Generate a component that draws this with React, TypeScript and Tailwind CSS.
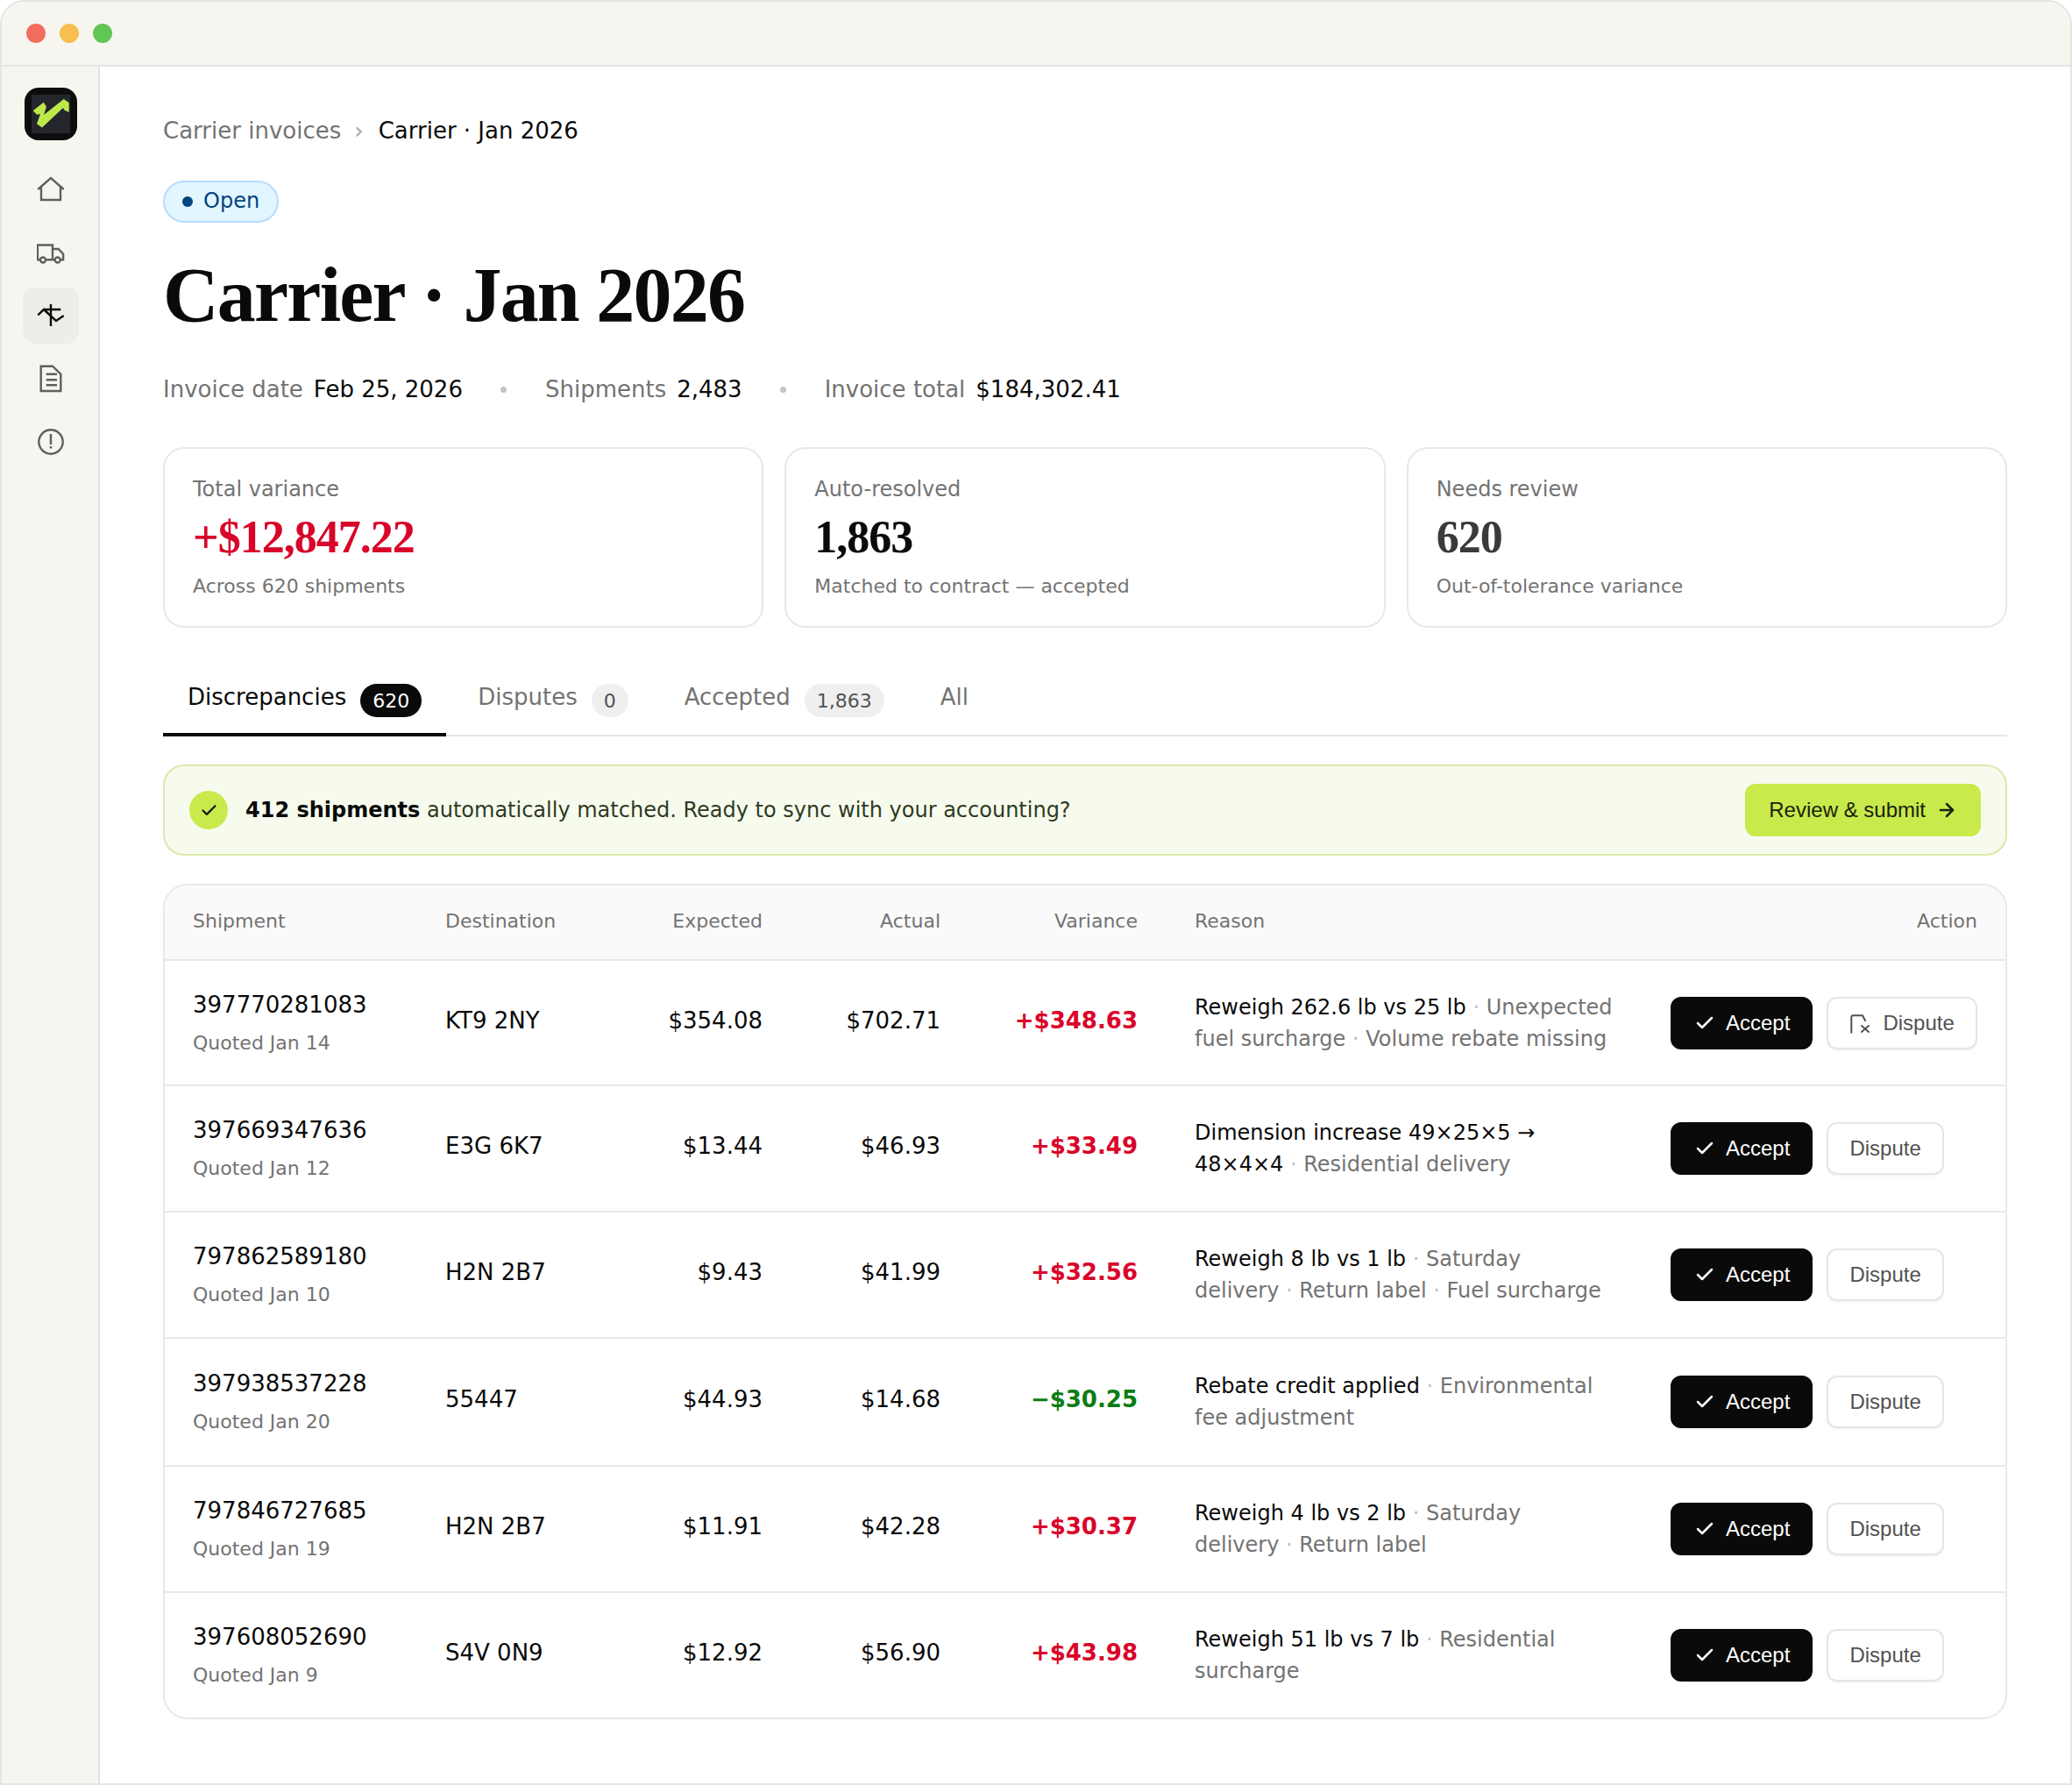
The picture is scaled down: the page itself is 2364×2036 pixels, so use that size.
import { ArrowRight, Check } from 'lucide-react'

const sans = 'font-["DejaVu_Sans",sans-serif]'

type Row = {
  id: string
  quoted: string
  dest: string
  expected: string
  actual: string
  variance: string
  credit?: boolean
  lead: string
  rest: string[]
  icon?: boolean
}

const rows: Row[] = [
  { id: '397770281083', quoted: 'Quoted Jan 14', dest: 'KT9 2NY', expected: '$354.08', actual: '$702.71', variance: '+$348.63', lead: 'Reweigh 262.6 lb vs 25 lb', rest: ['Unexpected fuel surcharge', 'Volume rebate missing'], icon: true },
  { id: '397669347636', quoted: 'Quoted Jan 12', dest: 'E3G 6K7', expected: '$13.44', actual: '$46.93', variance: '+$33.49', lead: 'Dimension increase 49×25×5 → 48×4×4', rest: ['Residential delivery'] },
  { id: '797862589180', quoted: 'Quoted Jan 10', dest: 'H2N 2B7', expected: '$9.43', actual: '$41.99', variance: '+$32.56', lead: 'Reweigh 8 lb vs 1 lb', rest: ['Saturday\ndelivery', 'Return label', 'Fuel surcharge'] },
  { id: '397938537228', quoted: 'Quoted Jan 20', dest: '55447', expected: '$44.93', actual: '$14.68', variance: '−$30.25', credit: true, lead: 'Rebate credit applied', rest: ['Environmental fee adjustment'] },
  { id: '797846727685', quoted: 'Quoted Jan 19', dest: 'H2N 2B7', expected: '$11.91', actual: '$42.28', variance: '+$30.37', lead: 'Reweigh 4 lb vs 2 lb', rest: ['Saturday\ndelivery', 'Return label'] },
  { id: '397608052690', quoted: 'Quoted Jan 9', dest: 'S4V 0N9', expected: '$12.92', actual: '$56.90', variance: '+$43.98', lead: 'Reweigh 51 lb vs 7 lb', rest: ['Residential surcharge'] },
]

const columns = 'grid grid-cols-[288px_212px_214px_203px_225px_544px_1fr]'

function NavIcon({ active, children }: { active?: boolean; children: React.ReactNode }) {
  return (
    <div className={`flex h-16 w-16 items-center justify-center rounded-[14px] ${active ? 'bg-[#efede7] text-[#0a0a0a]' : 'text-[#5f5f5f]'}`}>
      <svg width="32" height="32" viewBox="0 0 32 32" fill="none" stroke="currentColor" strokeWidth="2.4">
        {children}
      </svg>
    </div>
  )
}

function Stat({ label, value, sub, color }: { label: string; value: string; sub: string; color: string }) {
  return (
    <div className="h-[206px] rounded-[24px] border-2 border-[#e8e8e8] px-8 pt-[28px]">
      <div className="text-[24px] leading-[36px] text-[#737373]">{label}</div>
      <div className={`mt-[3px] font-['Liberation_Serif',serif] text-[52px] leading-[68px] font-bold tracking-[-1px] ${color}`}>{value}</div>
      <div className="mt-[5px] text-[22px] leading-[34px] text-[#737373]">{sub}</div>
    </div>
  )
}

function Tab({ label, count, active }: { label: string; count?: string; active?: boolean }) {
  return (
    <div className={`-mb-[2px] flex h-[78px] items-start gap-4 border-b-4 px-7 pt-[15px] ${active ? 'border-[#0a0a0a] text-[#0a0a0a]' : 'border-transparent text-[#737373]'}`}>
      <span className="text-[26px] leading-[36px]">{label}</span>
      {count && (
        <span className={`mt-[3px] flex h-[38px] items-center rounded-full px-[14px] text-[22px] ${active ? 'bg-[#0a0a0a] text-white' : 'bg-[#efefef] text-[#525252]'}`}>
          {count}
        </span>
      )}
    </div>
  )
}

export default function App() {
  return (
    <div className={`h-[2036px] w-[2364px] overflow-hidden rounded-t-[28px] border-2 border-[#e5e5e5] bg-white ${sans}`}>
      <div className="flex h-[74px] items-center gap-4 border-b-2 border-[#e5e5e5] bg-[#f7f5ef] pl-7">
        <span className="h-[22px] w-[22px] rounded-full bg-[#f26d60]" />
        <span className="h-[22px] w-[22px] rounded-full bg-[#f6bf4f]" />
        <span className="h-[22px] w-[22px] rounded-full bg-[#62c655]" />
      </div>
      <div className="flex">
        <aside className="flex h-[1960px] w-[112px] shrink-0 flex-col items-center gap-2 border-r-2 border-[#e3e1d9] bg-[#f7f5ef] pt-6 pl-[2px]">
          <div className="mb-4 flex h-[60px] w-[60px] items-center justify-center rounded-[16px] bg-[#0d0d0d]">
            <svg width="44" height="44" viewBox="0 0 44 44" className="bg-[#24262b]">
              <path d="M1.7 18.3 13.7 8.7 17 13.7 14 23 33 8 36.7 5 42.7 9.3V20L37.7 17.7 36 15 12 37.5 6 33.3 10 22 6 22.7Z" fill="#bde84a" />
            </svg>
          </div>
          <NavIcon>
            <path d="M1.3 16 16 3l14.7 13M5 13v15h22V13" />
          </NavIcon>
          <NavIcon>
            <path d="M4 24.2H.9V7.5H18v16.7M18 12h6.7l5.4 5.7v6.5h-3M10 24.2h10.7" />
            <circle cx="7" cy="24.5" r="3" />
            <circle cx="23.7" cy="24.5" r="3" />
          </NavIcon>
          <NavIcon active>
            <path d="M16 3v25M8.7 9h18.6M1.3 15.3 8 9l14 13 8.7-6" />
          </NavIcon>
          <NavIcon>
            <path d="M4.7 1.7H18l9.3 9V30H4.7zM10.7 10.7h12.3M10.7 17.3h12.3M10.7 23.3h12.3" />
          </NavIcon>
          <NavIcon>
            <circle cx="16" cy="16" r="13.7" />
            <path d="M16 7v12M16 21v2.4" />
          </NavIcon>
        </aside>

        <main className="min-w-0 flex-1 px-[72px] pt-[53px]">
          <div className="flex items-center text-[26px] leading-[40px]">
            <span className="text-[#737373]">Carrier invoices</span>
            <span className="pr-[17px] pl-[15px] text-[#a3a3a3]">›</span>
            <span className="text-[#0a0a0a]">Carrier · Jan 2026</span>
          </div>

          <div className="mt-[37px] flex h-12 w-[132px] items-center gap-3 rounded-full border-2 border-[#b5dcff] bg-[#e2f6ff] pl-5 text-[24px] text-[#00457f]">
            <span className="h-3 w-3 rounded-full bg-[#00457f]" />
            <span className="pb-[3px]">Open</span>
          </div>

          <h1 className="mt-[28px] font-['Liberation_Serif',serif] text-[88px] leading-[110px] font-bold tracking-[-1.76px] text-[#0a0a0a]">
            Carrier · Jan 2026
          </h1>

          <div className="mt-[32px] flex items-center text-[26px] leading-[40px]">
            <span className="text-[#737373]">Invoice date</span>
            <span className="ml-3 text-[#0a0a0a]">Feb 25, 2026</span>
            <span className="mr-[44px] ml-[43px] h-[7px] w-[7px] rounded-full bg-[#c4c4c4]" />
            <span className="text-[#737373]">Shipments</span>
            <span className="ml-3 text-[#0a0a0a]">2,483</span>
            <span className="mr-[44px] ml-[43px] h-[7px] w-[7px] rounded-full bg-[#c4c4c4]" />
            <span className="text-[#737373]">Invoice total</span>
            <span className="ml-3 text-[#0a0a0a]">$184,302.41</span>
          </div>

          <div className="mt-[46px] grid grid-cols-3 gap-6">
            <Stat label="Total variance" value="+$12,847.22" sub="Across 620 shipments" color="text-[#d90429]" />
            <Stat label="Auto-resolved" value="1,863" sub="Matched to contract — accepted" color="text-[#0a0a0a]" />
            <Stat label="Needs review" value="620" sub="Out-of-tolerance variance" color="text-[#3a3a3a]" />
          </div>

          <div className="mt-[46px] flex gap-2 border-b-2 border-[#e5e5e5]">
            <Tab label="Discrepancies" count="620" active />
            <Tab label="Disputes" count="0" />
            <Tab label="Accepted" count="1,863" />
            <Tab label="All" />
          </div>

          <div className="mt-8 flex h-[104px] items-center rounded-[24px] border-2 border-[#dbe8ab] bg-[#f7fbee] pr-7 pl-7">
            <span className="flex h-11 w-11 items-center justify-center rounded-full bg-[#c9ea4b] text-[#171717]">
              <Check size={21} strokeWidth={2.5} />
            </span>
            <p className="ml-5 flex-1 text-[24px] text-[#2e3a22]">
              <strong className="font-bold text-[#0a0a0a]">412 shipments</strong> automatically matched. Ready to sync with your accounting?
            </p>
            <button className="flex h-[60px] items-center gap-3 rounded-[12px] bg-[#c9ea4b] px-[27px] font-['Liberation_Sans',sans-serif] text-[24px] text-[#1a2310]">
              Review &amp; submit
              <ArrowRight size={24} strokeWidth={2.5} />
            </button>
          </div>

          <div className="mt-[32px] overflow-hidden rounded-[28px] border-2 border-[#e8e8e8]">
            <div className={`${columns} h-[86px] items-center border-b-2 border-[#e8e8e8] bg-[#fafafa] pb-[3px] text-[22px] text-[#737373]`}>
              <div className="px-8">Shipment</div>
              <div className="px-8">Destination</div>
              <div className="px-8 text-right">Expected</div>
              <div className="px-8 text-right">Actual</div>
              <div className="px-8 text-right">Variance</div>
              <div className="pr-8 pl-[33px]">Reason</div>
              <div className="px-8 text-right">Action</div>
            </div>
            {rows.map((row, i) => (
              <div key={row.id} className={`${columns} items-center text-[26px] text-[#0a0a0a] ${i === 0 ? 'h-[141px]' : i === 3 ? 'h-[146px] border-t-2 border-[#e8e8e8]' : 'h-[144px] border-t-2 border-[#e8e8e8]'}`}>
                <div className="px-8">
                  <div className="leading-[40px]">{row.id}</div>
                  <div className="mt-[6px] text-[22px] leading-[36px] text-[#737373]">{row.quoted}</div>
                </div>
                <div className="px-8 pb-[5px]">{row.dest}</div>
                <div className="px-8 pb-[5px] text-right">{row.expected}</div>
                <div className="px-8 pb-[5px] text-right">{row.actual}</div>
                <div className={`px-8 pb-[5px] text-right font-bold ${row.credit ? 'text-[#0a7d12]' : 'text-[#d90429]'}`}>{row.variance}</div>
                <div className="pr-8 pl-[33px] text-[24px] leading-[36px] whitespace-pre-line">
                  {row.lead}
                  {row.rest.map((part) => (
                    <span key={part}>
                      <span className="text-[#bdbdbd]"> · </span>
                      <span className="text-[#737373]">{part}</span>
                    </span>
                  ))}
                </div>
                <div className="flex items-center gap-4 px-8 font-['Liberation_Sans',sans-serif] text-[24px]">
                  <button className="flex h-[60px] items-center gap-3 rounded-[12px] border-2 border-[#0a0a0a] bg-[#0a0a0a] pr-6 pl-[25px] text-white">
                    <Check size={24} strokeWidth={2.5} />
                    Accept
                  </button>
                  <button className="flex h-[60px] items-center gap-[14px] rounded-[12px] border-2 border-[#e5e5e5] bg-white px-6 text-[#525252] shadow-[0_2px_2px_rgba(0,0,0,0.04)]">
                    {row.icon && (
                      <svg width="24" height="24" viewBox="0 0 24 24" fill="none" stroke="currentColor" strokeWidth="2" strokeLinecap="round">
                        <path d="M2.3 22.7V5.3a2 2 0 0 1 2-2h10.7L18 9M14 15l8 7M22 15l-8 7" />
                      </svg>
                    )}
                    Dispute
                  </button>
                </div>
              </div>
            ))}
          </div>
        </main>
      </div>
    </div>
  )
}
